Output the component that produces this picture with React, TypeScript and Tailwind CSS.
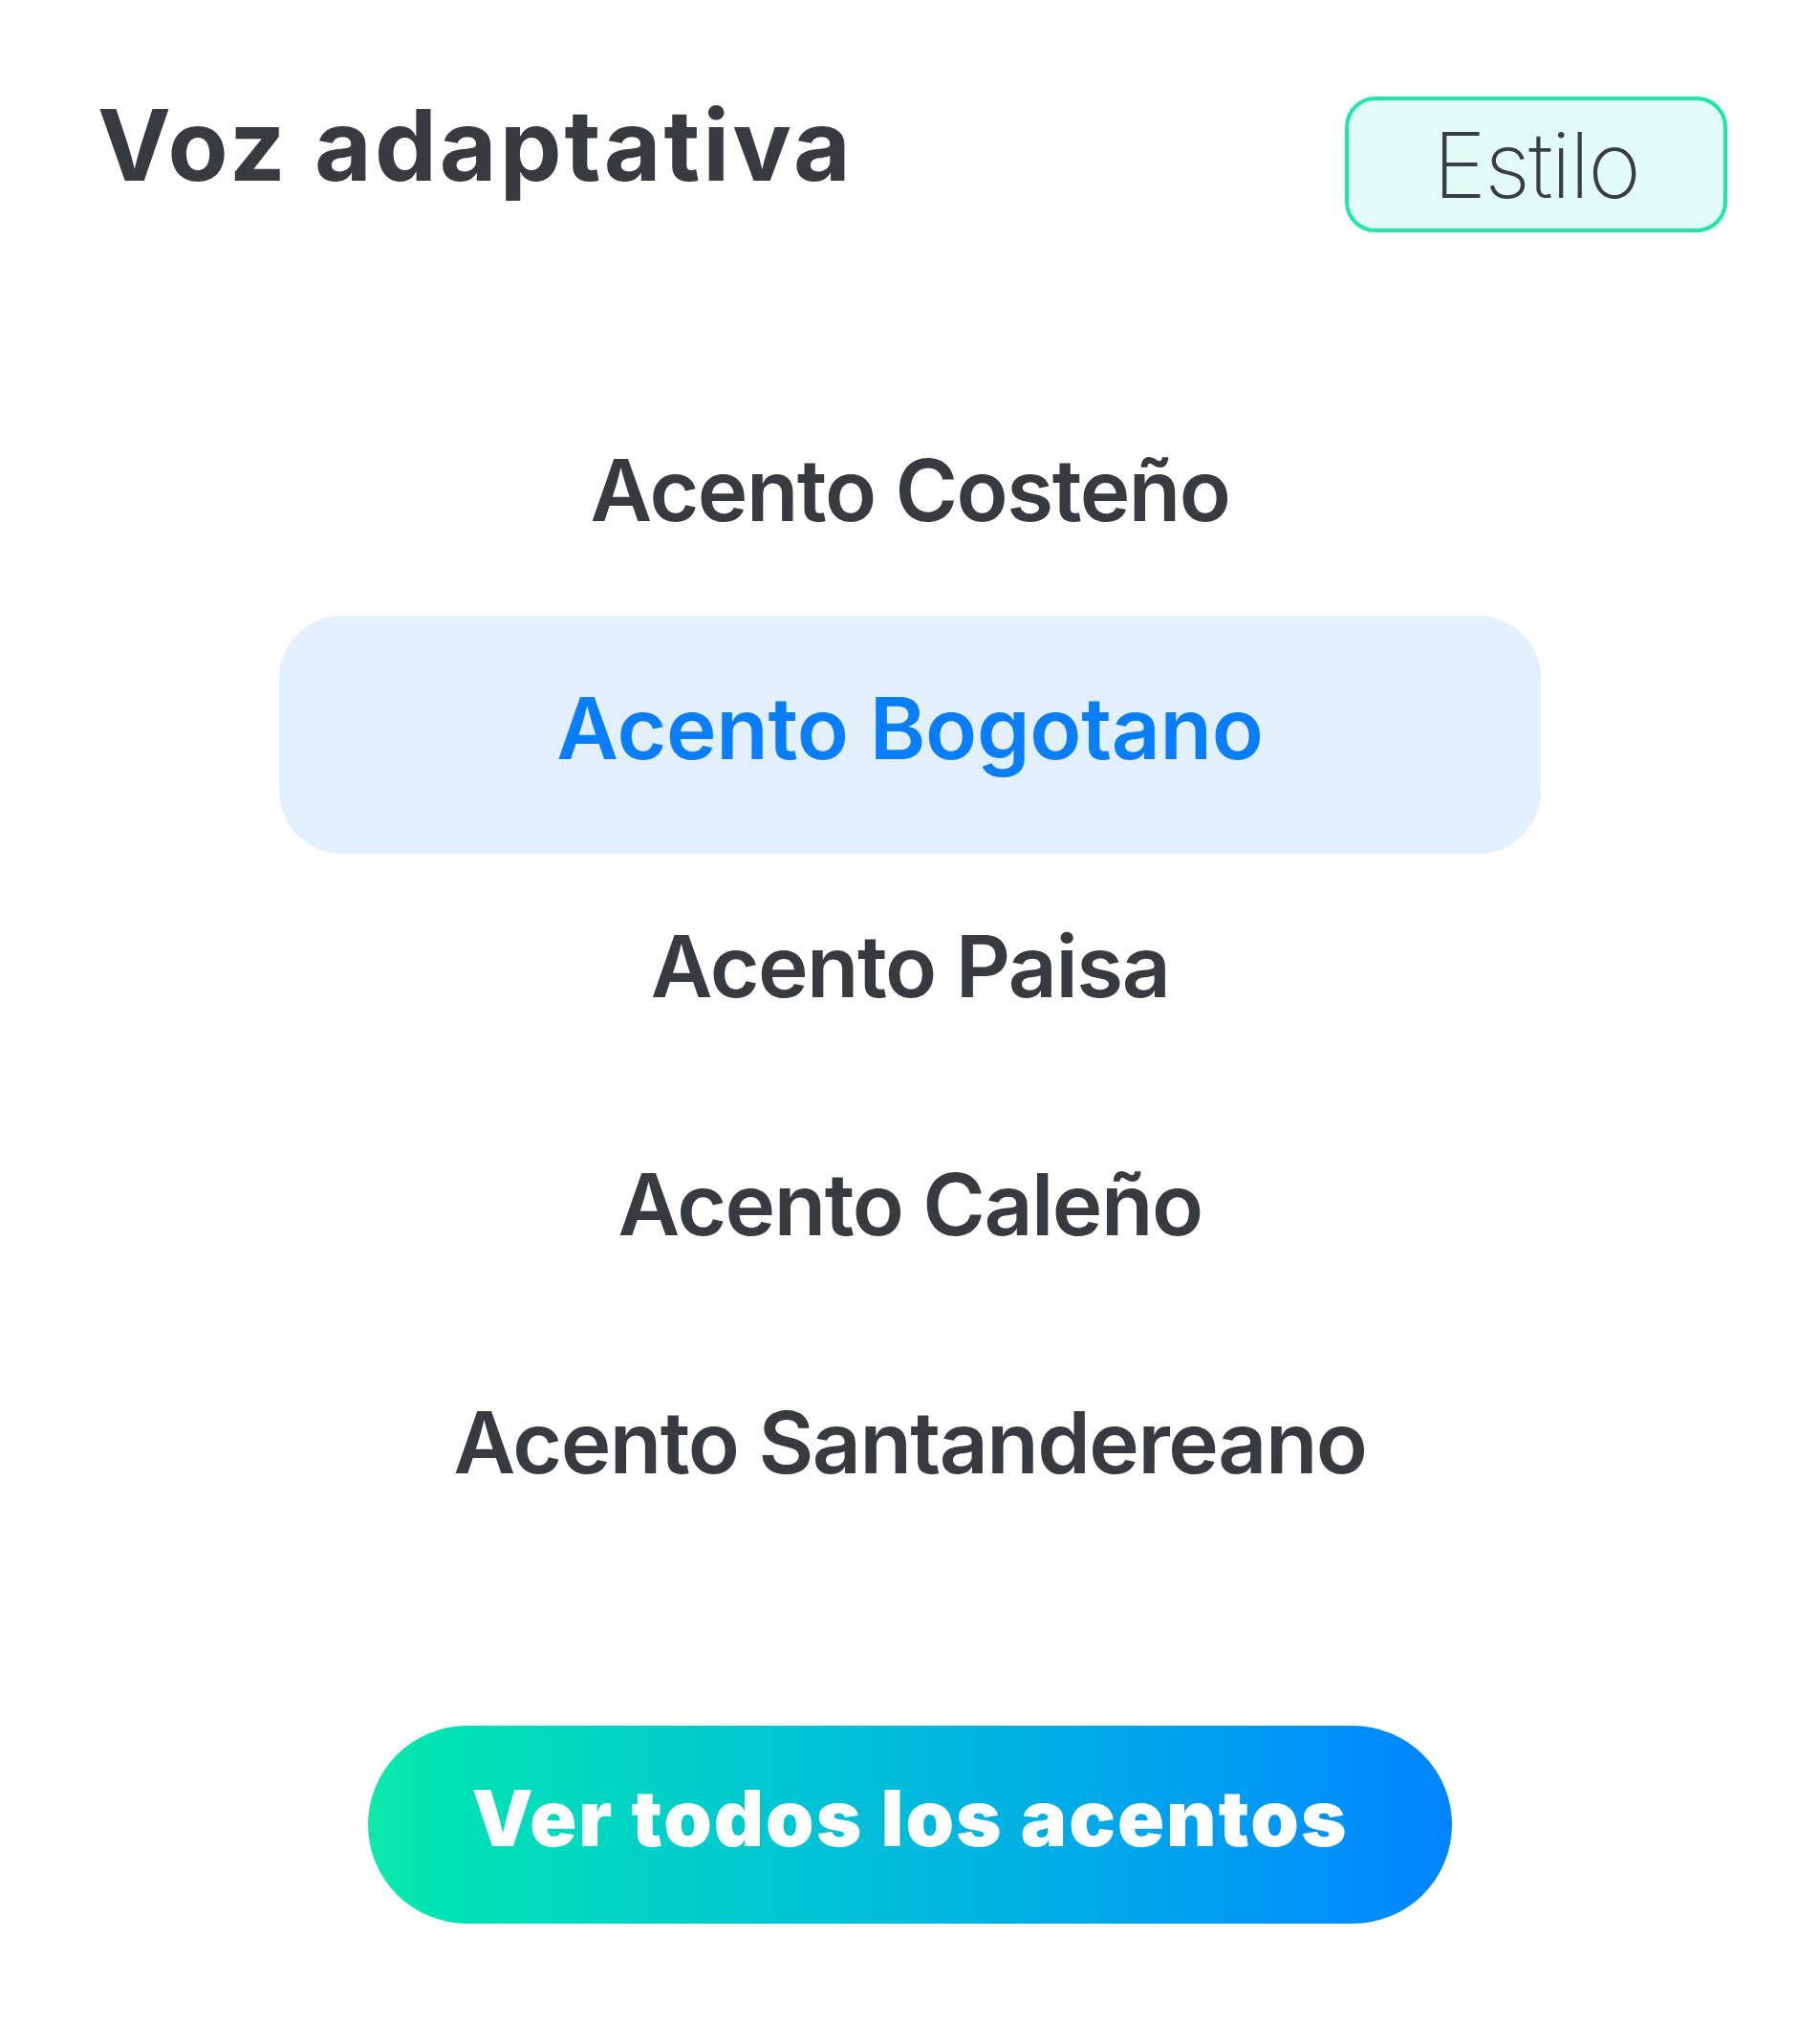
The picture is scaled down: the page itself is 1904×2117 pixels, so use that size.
import React from "react";

const items = [
  "Acento Costeño",
  "Acento Bogotano",
  "Acento Paisa",
  "Acento Caleño",
  "Acento Santandereano",
];

export default function App() {
  return (
    <div
      className="w-full h-[2117px] bg-white flex flex-col"
      style={{ fontFamily: "Inter, 'Noto Sans', sans-serif" }}
    >
      <div className="flex justify-between items-start pl-[102px] pr-[97px] pt-[100px]">
        <h1 className="text-[103px] leading-none font-bold text-[#373a3f] tracking-[3px]">
          Voz adaptativa
        </h1>
        <div className="mt-[1px] w-[400px] h-[142px] rounded-[32px] border-[4px] border-[#1ee8a6] bg-[#e3fbf7] flex items-center justify-center">
          <span className="text-[95px] leading-none font-extralight text-[#3a3d42] tracking-[-2px]">
            Estilo
          </span>
        </div>
      </div>

      <div className="mt-[145px] flex flex-col items-center">
        {items.map((t, i) => (
          <div
            key={t}
            className={
              i === 1
                ? "mt-[7px] -mb-[7px] pb-[14px] h-[249px] w-[1320px] rounded-[66px] bg-[#e2effd] flex items-center justify-center"
                : "h-[249px] w-[1320px] flex items-center justify-center"
            }
          >
            <span
              className={
                i === 1
                  ? "text-[89px] leading-none font-semibold text-[#0a7df8] tracking-[-0.3px]"
                  : "text-[89px] leading-none font-semibold text-[#373a3f] tracking-[-1.5px]"
              }
            >
              {t}
            </span>
          </div>
        ))}
      </div>

      <div className="mt-[172px] flex justify-center">
        <button className="w-[1134px] h-[207px] pb-[12px] rounded-full bg-gradient-to-r from-[#0fe9ab] to-[#0184ff] flex items-center justify-center">
          <span className="text-[81px] leading-none font-black text-white tracking-[2px]">
            Ver todos los acentos
          </span>
        </button>
      </div>
    </div>
  );
}
